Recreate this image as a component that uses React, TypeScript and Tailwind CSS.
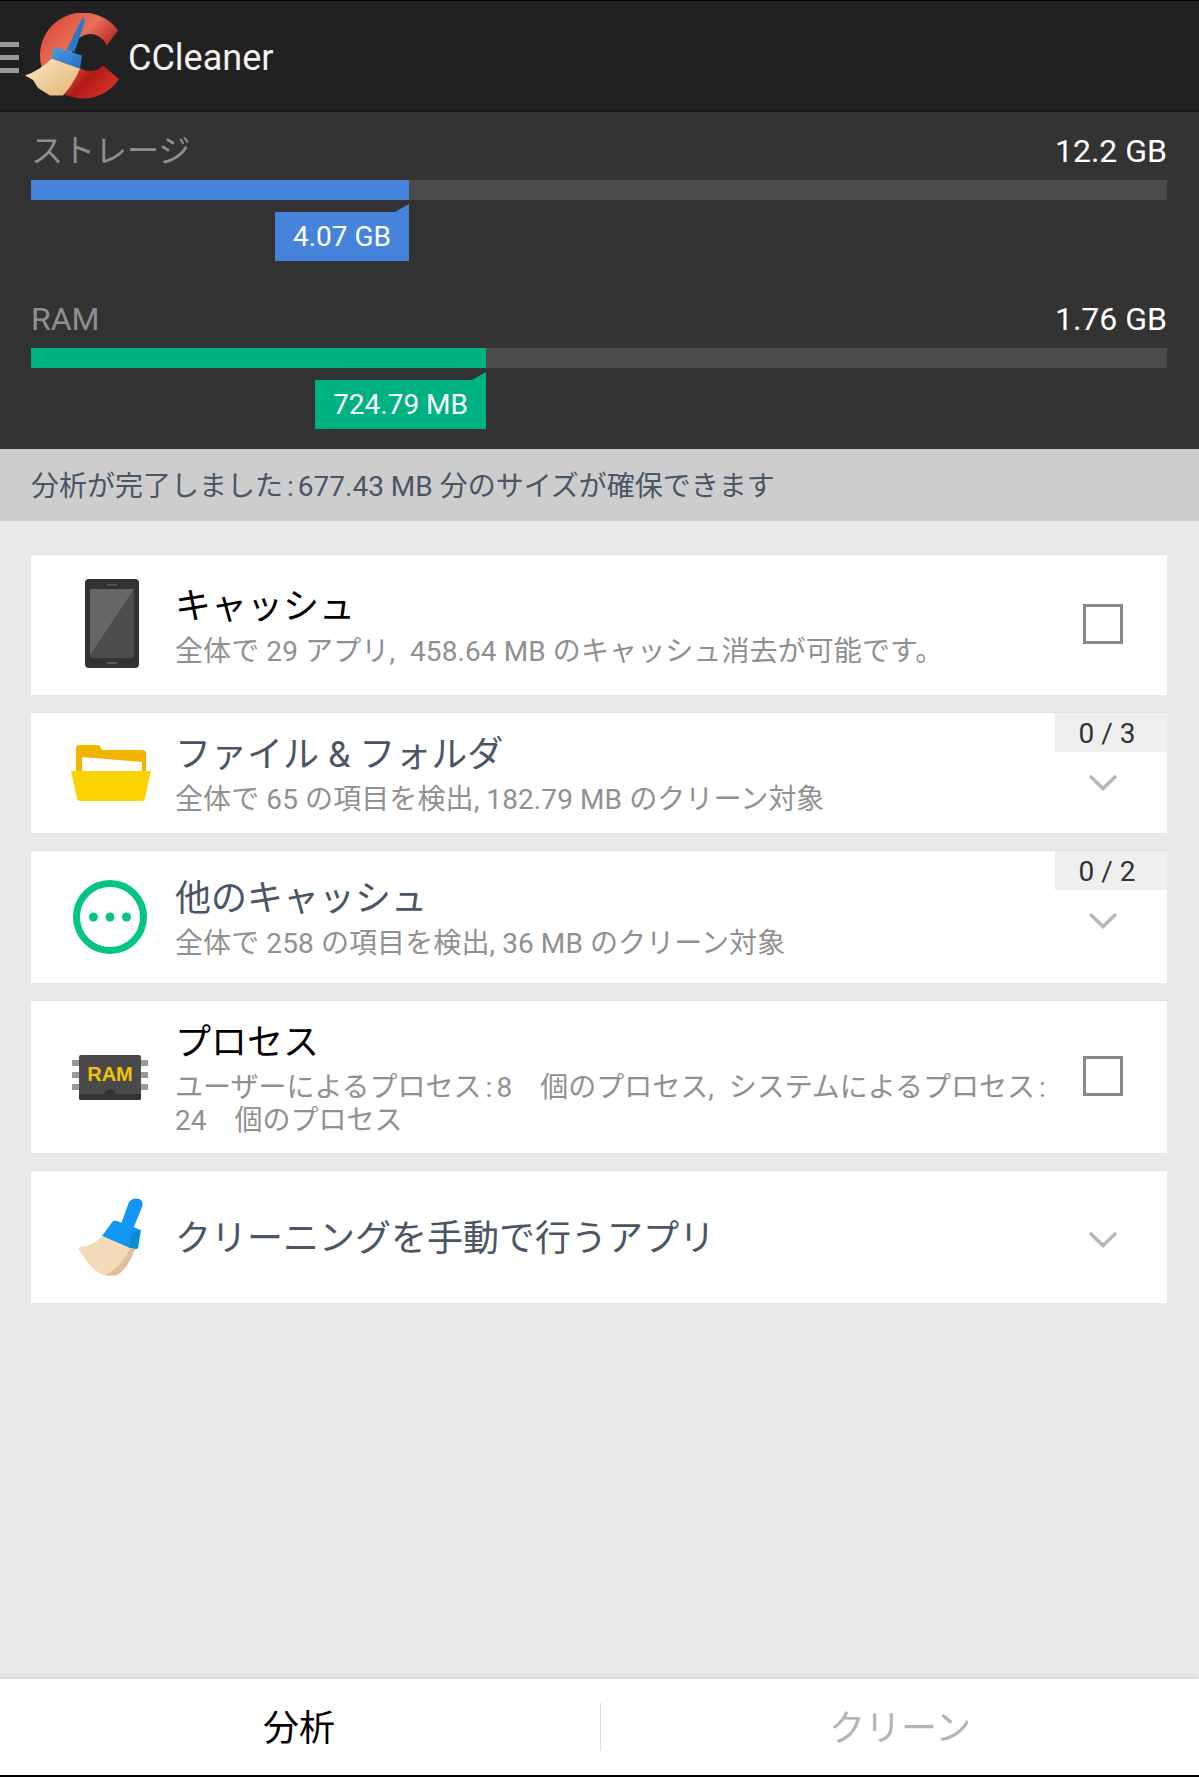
import { ReactNode } from 'react'

const Logo = () => (
  <svg width="100" height="90" viewBox="0 0 100 90" className="shrink-0">
    <defs>
      <linearGradient id="cRed" x1="0" y1="0" x2="1" y2="1">
        <stop offset="0" stopColor="#d8402c" />
        <stop offset="0.4" stopColor="#ea7058" />
        <stop offset="0.68" stopColor="#b01c18" />
        <stop offset="1" stopColor="#e23a2c" />
      </linearGradient>
      <linearGradient id="bristle" x1="0" y1="0" x2="1" y2="1">
        <stop offset="0" stopColor="#fae6c4" />
        <stop offset="1" stopColor="#e2b571" />
      </linearGradient>
      <linearGradient id="head" x1="0" y1="0" x2="1" y2="1">
        <stop offset="0" stopColor="#4f9bdf" />
        <stop offset="1" stopColor="#1f6fc4" />
      </linearGradient>
    </defs>
    <path d="M93 17.5 A43 43 0 1 0 94 66 L78 52.5 A18 18.5 0 1 1 81.7 32.5 Z" fill="url(#cRed)" />
    <path d="M57 5.5 Q60 4.5 60 8 L49.5 39 L41.5 37 Z" fill="#2a78cc" />
    <path d="M28.3 36 Q30 34 33 35 L57 42.5 L55 55.8 L26.7 45.8 Z" fill="url(#head)" />
    <path d="M26.7 45.8 L55 55.8 Q48 72 38 82.5 L25 82.5 L13 75 L8 67 L0 62.5 Q14 58 26.7 45.8 Z" fill="url(#bristle)" />
  </svg>
)

const TabletIcon = () => (
  <svg width="54" height="89" viewBox="0 0 54 89" className="ml-[3px] -mt-[4px]">
    <rect width="54" height="89" rx="4" fill="#333333" />
    <rect x="5" y="10" width="44" height="69" rx="2" fill="#4d4d4d" />
    <path d="M5 76 L5 12 Q5 10 7 10 L49 10 Z" fill="#666666" />
    <rect x="22" y="5" width="10" height="1.5" fill="#5a5a5a" />
    <rect x="22" y="83" width="10" height="2" fill="#5a5a5a" />
  </svg>
)

const FolderIcon = () => (
  <svg width="80" height="56" viewBox="0 0 80 56" className="ml-[2px]">
    <path d="M5 26 L5 3 Q5 0 8 0 L27 0 Q29 0 30 3 L31 5 L71 5 Q75 5 75 8 L75 26 Z" fill="#f1b400" />
    <path d="M11 12 L71 17 L71 28 L11 28 Z" fill="#ffffff" />
    <path d="M0 26 L80 26 L74 53 Q73.5 56 71 56 L9 56 Q6.5 56 6 53 Z" fill="#fbd300" />
  </svg>
)

const DotsIcon = () => (
  <svg width="74" height="74" viewBox="0 0 74 74">
    <circle cx="37" cy="37" r="33.5" fill="none" stroke="#05c486" strokeWidth="7" />
    <circle cx="20.5" cy="37" r="4.5" fill="#05c486" />
    <circle cx="37" cy="37" r="4.5" fill="#05c486" />
    <circle cx="53.5" cy="37" r="4.5" fill="#05c486" />
  </svg>
)

const RamIcon = () => (
  <div className="relative w-[76px] h-[45px]">
    <div className="absolute inset-0 flex flex-col justify-center gap-[6px] pb-[4px]">
      <div className="h-[6px] bg-[#999999]" />
      <div className="h-[6px] bg-[#999999]" />
      <div className="h-[6px] bg-[#999999]" />
    </div>
    <div className="absolute top-0 bottom-0 left-[7px] right-[7px] rounded-[2px] bg-[#4a4a4a] overflow-hidden flex justify-center pt-[8px]">
      <span className="text-[20px] leading-[22px] font-bold text-[#f3c200] font-['Liberation_Sans',sans-serif]">RAM</span>
      <div className="absolute left-0 right-0 bottom-0 h-[6px] bg-[#333333]" />
      <div className="absolute left-[25px] bottom-[2px] w-[12px] h-[9px] rounded-t-full bg-[#333333]" />
    </div>
  </div>
)

const BroomIcon = () => (
  <svg width="66" height="78" viewBox="0 0 66 78">
    <path d="M52 4 Q56 -1 62 1 Q67 3 65 9 L56 31 L44 26 Z" fill="#1296f3" />
    <path d="M36 23 Q37 22 40 23 L64 32 L61 50 Q58 52 52 50 L25 38 Z" fill="#1296f3" />
    <path d="M54 36 L63 32 L61 50 Q58 52 52 50 Z" fill="#0b8ccf" />
    <path d="M25 38 L53 50 L58 51 Q50 72 40 77 Q34 78 26 77 Q14 72 3 53 Q0 50 3 49 Q17 48 25 38 Z" fill="#f3dab8" />
    <path d="M53 50 L58 51 Q50 72 40 77 Q34 78 28 77 Q46 68 53 50 Z" fill="#e0c09c" />
  </svg>
)

const Chevron = () => (
  <svg width="30" height="18" viewBox="0 0 30 18" fill="none">
    <path d="M2 2 L15 14.5 L28 2" stroke="#b8b8b8" strokeWidth="3.5" />
  </svg>
)

const Checkbox = () => <div className="w-[40px] h-[40px] -mt-[2px] border-[3px] border-[#888888]" />

function UsageBar({ label, total, used, fillWidth, tagWidth, color, triangle }: { label: string; total: string; used: string; fillWidth: string; tagWidth: string; color: string; triangle: string }) {
  return (
    <div>
      <div className="flex justify-between h-[46px] text-[32px] leading-[34px]">
        <span className="text-[#8f8f8f]">{label}</span>
        <span className="text-white">{total}</span>
      </div>
      <div className="h-[20px] bg-[#4b4b4b]">
        <div className={`h-full ${fillWidth} ${color}`} />
      </div>
      <div className={`${fillWidth} flex justify-end mt-[12px]`}>
        <div className={`relative ${tagWidth} h-[49px] ${color} flex items-center justify-center text-white text-[28px]`}>
          {used}
          <div className={`absolute right-0 top-[-8px] w-0 h-0 border-l-[14px] border-b-[8px] border-l-transparent ${triangle}`} />
        </div>
      </div>
    </div>
  )
}

function Row({ icon, height, title, dark, sub, right, count }: { icon: ReactNode; height: string; title: string; dark?: boolean; sub?: ReactNode; right: ReactNode; count?: string }) {
  return (
    <div className={`relative ${height} bg-white border-t border-[#e0e0e0] flex items-center`}>
      <div className="w-[144px] shrink-0 pl-[14px] flex justify-center">{icon}</div>
      <div className="flex-1 min-w-0 whitespace-nowrap pt-[4px]">
        <div className={`text-[36px] leading-[42px] ${dark ? 'text-black' : 'text-[#4a5565]'}`}>{title}</div>
        {sub && <div className="text-[28px] leading-[33px] text-[#909090] mt-[7px]">{sub}</div>}
      </div>
      <div className="w-[128px] shrink-0 flex justify-center">{right}</div>
      {count && (
        <div className="absolute top-0 right-0 w-[112px] h-[39px] bg-[#efefef] flex items-center justify-center pr-[8px] pt-[2px] text-[28px] text-[#333333]">{count}</div>
      )}
    </div>
  )
}

export default function App() {
  return (
    <div className="h-[1777px] flex flex-col bg-[#e9e9e9] font-[Roboto,'Noto_Sans_CJK_JP',sans-serif] overflow-hidden">
      {/* Header */}
      <div className="h-[112px] shrink-0 bg-[#212121] border-t border-black border-b-2 border-b-[#1a1a1a] pt-[4px] flex items-center">
        <div className="w-[19px] shrink-0 flex flex-col gap-[8px]">
          <div className="h-[5px] bg-[#9a9a9a]" />
          <div className="h-[5px] bg-[#9a9a9a]" />
          <div className="h-[5px] bg-[#9a9a9a]" />
        </div>
        <div className="ml-[6px]"><Logo /></div>
        <span className="ml-[3px] text-[36px] text-[#f2f2f2]">CCleaner</span>
      </div>

      {/* Usage */}
      <div className="shrink-0 bg-[#333333] pl-[31px] pr-[32px] pt-[22px] pb-[20px] flex flex-col gap-[41px]">
        <UsageBar label="ストレージ" total="12.2 GB" used="4.07 GB" fillWidth="w-[378px]" tagWidth="w-[134px]" color="bg-[#4684dc]" triangle="border-b-[#4684dc]" />
        <UsageBar label="RAM" total="1.76 GB" used="724.79 MB" fillWidth="w-[455px]" tagWidth="w-[171px]" color="bg-[#00b182]" triangle="border-b-[#00b182]" />
      </div>

      <div className="h-[72px] shrink-0 bg-[#cdcdcd] px-[31px] pt-[4px] flex items-center text-[28px] text-[#4a5565]">
        <span>分析が完了しました<span className="mx-[4px]">:</span>677.43 MB 分のサイズが確保できます</span>
      </div>

      {/* List */}
      <div className="flex-1 pl-[31px] pr-[32px] pt-[33px] flex flex-col gap-[17px]">
        <Row icon={<TabletIcon />} height="h-[141px]" title="キャッシュ" dark sub={<span className="tracking-[0.1px]">全体で 29 アプリ<span className="mr-[15px]">,</span>458.64 MB のキャッシュ消去が可能です。</span>} right={<Checkbox />} />
        <Row icon={<FolderIcon />} height="h-[121px]" title="ファイル & フォルダ" sub={<span className="tracking-[0.1px]">全体で 65 の項目を検出, 182.79 MB のクリーン対象</span>} right={<div className="pt-[20px]"><Chevron /></div>} count="0 / 3" />
        <Row icon={<DotsIcon />} height="h-[133px]" title="他のキャッシュ" sub={<span className="tracking-[0.1px]">全体で 258 の項目を検出, 36 MB のクリーン対象</span>} right={<div className="pt-[7px]"><Chevron /></div>} count="0 / 2" />
        <Row icon={<RamIcon />} height="h-[153px]" title="プロセス" dark sub={<>ユーザーによるプロセス<span className="mx-[4px]">:</span>8　個のプロセス<span className="mr-[15px]">,</span>システムによるプロセス<span className="ml-[4px]">:</span><br />24　個のプロセス</>} right={<Checkbox />} />
        <Row icon={<BroomIcon />} height="h-[133px]" title="クリーニングを手動で行うアプリ" right={<div className="pt-[6px]"><Chevron /></div>} />
      </div>

      {/* Bottom tabs */}
      <div className="h-[98px] shrink-0 bg-white border-b-2 border-black flex items-center shadow-[0_-2px_6px_rgba(0,0,0,0.08)]">
        <div className="flex-1 text-center text-[36px] text-black pt-[3px] pr-[2px]">分析</div>
        <div className="w-px h-[48px] bg-[#dddddd]" />
        <div className="flex-1 text-center text-[36px] text-[#b5b5b5] pt-[3px]">クリーン</div>
      </div>
    </div>
  )
}
